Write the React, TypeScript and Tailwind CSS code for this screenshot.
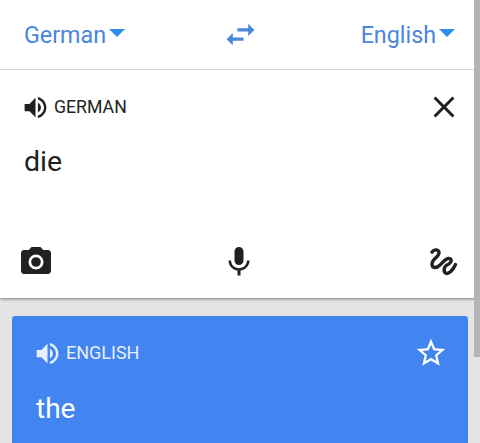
import React from "react";

const I = ({ d, size, className }: { d: string; size: number; className?: string }) => (
  <svg width={size} height={size} viewBox="0 0 24 24" fill="currentColor" className={className}>
    <path d={d} />
  </svg>
);

const VOL = "M3 9v6h4l5 5V4L7 9H3zm13.5 3c0-1.77-1.02-3.29-2.5-4.03v8.05c1.48-.73 2.5-2.25 2.5-4.02zM14 3.23v2.06c2.89.86 5 3.54 5 6.71s-2.11 5.85-5 6.71v2.06c4.01-.91 7-4.49 7-8.77s-2.99-7.86-7-8.77z";

const Lang = ({ label }: { label: string }) => (
  <div className="flex items-center gap-[3px]">
    <span className="text-[23.3px] leading-[32px] text-[#4a86dc]">{label}</span>
    <span className="mb-[4px] h-0 w-0 border-x-[8px] border-t-[8px] border-x-transparent border-t-[#2f8fe8]" />
  </div>
);

export default function App() {
  return (
    <div className="relative h-[443px] w-[480px] overflow-hidden bg-[#e4e4e4] font-['Roboto',sans-serif]">
      <div className="h-[298px] bg-white pr-[6px] shadow-[0_1px_3px_rgba(0,0,0,0.45)] relative">
        <div className="flex h-[70px] items-center justify-between border-b border-[#d4d4d4] pl-[24px] pr-[19px] -mr-[6px]">
          <Lang label="German" />
          <I size={37} className="mr-[5px] text-[#4a86dc]" d="M6.99 11L3 15l3.99 4v-3H14v-2H6.99v-3zM21 9l-3.99-4v3H10v2h7.01v3L21 9z" />
          <div className="mr-[6px]"><Lang label="English" /></div>
        </div>
        <div className="flex h-[228px] flex-col pl-[24px] pr-[12px] text-[#212121]">
          <div className="mt-[19px] flex items-center justify-between">
            <div className="flex items-center gap-[4px]">
              <I size={29} className="-ml-[3px]" d={VOL} />
              <span className="text-[17.7px] leading-[20px]">GERMAN</span>
            </div>
            <I size={36} d="M19 6.41L17.59 5 12 10.59 6.41 5 5 6.41 10.59 12 5 17.59 6.41 19 12 13.41 17.59 19 19 17.59 13.41 12z" />
          </div>
          <div className="mt-[19px] text-[28.5px] leading-[36px]">die</div>
          <div className="mt-auto mb-[18px] flex items-center justify-between">
            <I size={36} className="-ml-[6px]" d="M9 2L7.17 4H4c-1.1 0-2 .9-2 2v12c0 1.1.9 2 2 2h16c1.1 0 2-.9 2-2V6c0-1.1-.9-2-2-2h-3.17L15 2H9zm3 15a5 5 0 1 1 0-10 5 5 0 0 1 0 10zm0-1.8a3.2 3.2 0 1 0 0-6.4 3.2 3.2 0 0 0 0 6.4z" />
            <I size={36} className="-ml-[1px]" d="M12 14c1.66 0 3-1.34 3-3V5c0-1.66-1.34-3-3-3S9 3.34 9 5v6c0 1.66 1.34 3 3 3zm5.3-3c0 3-2.54 5.1-5.3 5.1S6.7 14 6.7 11H5c0 3.41 2.72 6.23 6 6.72V21h2v-3.28c3.28-.48 6-3.3 6-6.72h-1.7z" />
            <svg width="36" height="36" viewBox="0 0 36 36" fill="none" stroke="currentColor" strokeWidth="3.4" strokeLinecap="round" strokeLinejoin="round" className="mr-[2px]">
              <path d="M8 8C10 5 15 5 15 9C15 13 8 15 8 20C8 25 13 24 16 21C19 18 22 14 25 14.500C29 15 27 19 24 20.500C20 22 19 27 21.500 29C24.500 31 29 26 31.500 20.500" />
            </svg>
          </div>
        </div>
      </div>
      <div className="ml-[12px] mt-[18px] h-[127px] w-[456px] rounded-t-[3px] bg-[#4285f0] pl-[24px] pr-[20px] text-white">
        <div className="flex items-center justify-between pt-[20px]">
          <div className="flex items-center gap-[4px] text-[#e6effd]">
            <I size={29} className="-ml-[3px]" d={VOL} />
            <span className="text-[18px] leading-[20px]">ENGLISH</span>
          </div>
          <I size={34} d="M22 9.24l-7.19-.62L12 2 9.19 8.63 2 9.24l5.46 4.73L5.82 21 12 17.27 18.18 21l-1.63-7.03L22 9.24zM12 15.4l-3.76 2.27 1-4.28-3.32-2.88 4.38-.38L12 6.1l1.71 4.04 4.38.38-3.32 2.88 1 4.28L12 15.4z" />
        </div>
        <div className="mt-[21px] text-[28px] leading-[36px]">the</div>
      </div>
      <div className="absolute right-0 top-0 h-[357px] w-[6px] bg-[#b4b4b4]" />
    </div>
  );
}
